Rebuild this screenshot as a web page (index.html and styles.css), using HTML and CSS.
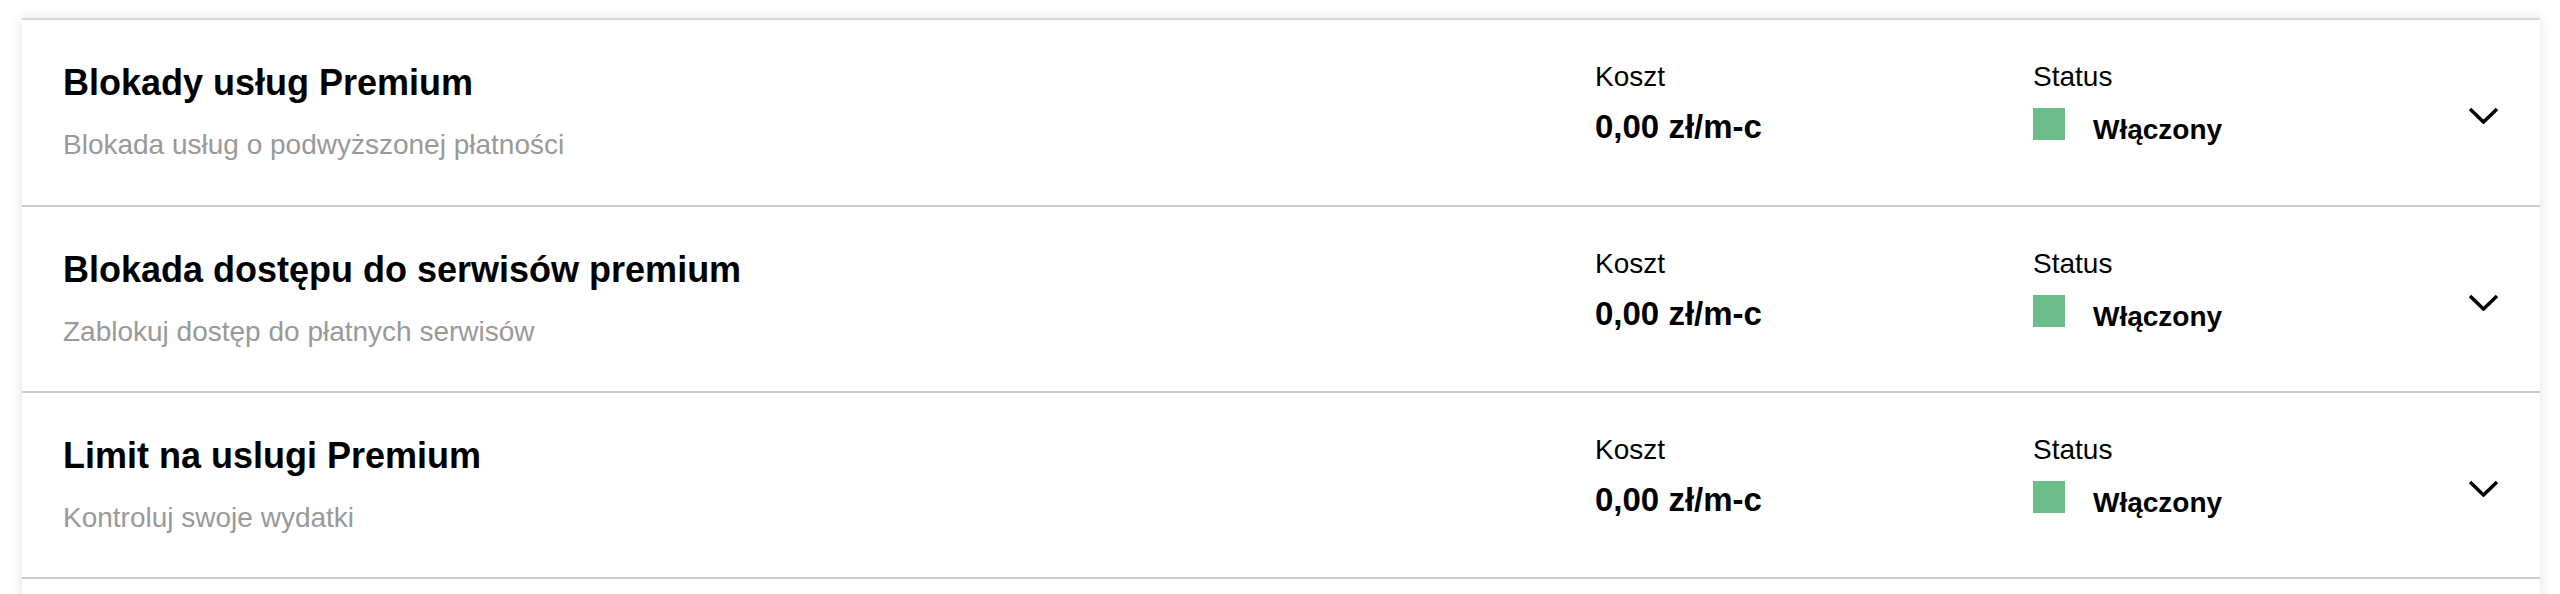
FILE: index.html
```html
<!DOCTYPE html>
<html lang="pl">
<head>
    <meta charset="UTF-8">
    <meta name="viewport" content="width=device-width, initial-scale=1.0">
    <title>Usługi Premium</title>
    <link rel="stylesheet" href="styles.css">
</head>
<body>
    <div class="list">
        <div class="item">
            <div class="info">
                <h2 class="title">Blokady usług Premium</h2>
                <p class="desc">Blokada usług o podwyższonej płatności</p>
            </div>
            <div class="cost">
                <p class="label">Koszt</p>
                <p class="value">0,00 zł/m-c</p>
            </div>
            <div class="status">
                <p class="label">Status</p>
                <div class="state">
                    <span class="dot"></span>
                    <span class="state-text">Włączony</span>
                </div>
            </div>
            <button class="toggle">
                <svg width="31" height="17" viewBox="0 0 31 17"><polyline points="2,2 15.5,15 29,2" fill="none" stroke="#000" stroke-width="3.5"/></svg>
            </button>
        </div>
        <div class="item">
            <div class="info">
                <h2 class="title">Blokada dostępu do serwisów premium</h2>
                <p class="desc">Zablokuj dostęp do płatnych serwisów</p>
            </div>
            <div class="cost">
                <p class="label">Koszt</p>
                <p class="value">0,00 zł/m-c</p>
            </div>
            <div class="status">
                <p class="label">Status</p>
                <div class="state">
                    <span class="dot"></span>
                    <span class="state-text">Włączony</span>
                </div>
            </div>
            <button class="toggle">
                <svg width="31" height="17" viewBox="0 0 31 17"><polyline points="2,2 15.5,15 29,2" fill="none" stroke="#000" stroke-width="3.5"/></svg>
            </button>
        </div>
        <div class="item">
            <div class="info">
                <h2 class="title">Limit na uslugi Premium</h2>
                <p class="desc">Kontroluj swoje wydatki</p>
            </div>
            <div class="cost">
                <p class="label">Koszt</p>
                <p class="value">0,00 zł/m-c</p>
            </div>
            <div class="status">
                <p class="label">Status</p>
                <div class="state">
                    <span class="dot"></span>
                    <span class="state-text">Włączony</span>
                </div>
            </div>
            <button class="toggle">
                <svg width="31" height="17" viewBox="0 0 31 17"><polyline points="2,2 15.5,15 29,2" fill="none" stroke="#000" stroke-width="3.5"/></svg>
            </button>
        </div>
        <div class="item"></div>
    </div>
</body>
</html>
```

FILE: styles.css
```css
body
{
    margin: 0;
    font-family: "Liberation Sans", Arial, sans-serif;
    background: #fff;
    color: #000;
}
.list
{
    margin: 18px 20px 0 22px;
    background: #fff;
    box-shadow: 0 0 12px rgba(0, 0, 0, 0.12);
    border-top: 2px solid #d9d9d9;
}
.item
{
    display: flex;
    align-items: flex-start;
    height: 184px;
    padding: 0 41px;
    border-bottom: 2px solid #cccccc;
}
.item:first-child
{
    height: 185px;
}
.info
{
    flex: 1;
    padding-top: 41px;
}
.title
{
    font-size: 36px;
    line-height: 44px;
    font-weight: 700;
    margin: 0;
}
.desc
{
    font-size: 28px;
    line-height: 36px;
    color: #999;
    margin: 22px 0 0;
}
.cost
{
    width: 438px;
    padding-top: 39px;
}
.status
{
    width: 435px;
    padding-top: 39px;
}
.label
{
    font-size: 28px;
    line-height: 36px;
    margin: 0;
}
.value
{
    font-size: 33px;
    line-height: 40px;
    font-weight: 700;
    margin: 12px 0 0;
}
.state
{
    display: flex;
    align-items: flex-start;
    margin-top: 13px;
}
.dot
{
    width: 32px;
    height: 32px;
    background: #6dbd8b;
}
.state-text
{
    font-size: 28px;
    line-height: 32px;
    font-weight: 700;
    margin: 6px 0 0 28px;
}
.toggle
{
    border: 0;
    background: none;
    padding: 0;
    width: 31px;
    height: 17px;
    margin-top: 87px;
    cursor: pointer;
}
.toggle svg
{
    display: block;
}
```
